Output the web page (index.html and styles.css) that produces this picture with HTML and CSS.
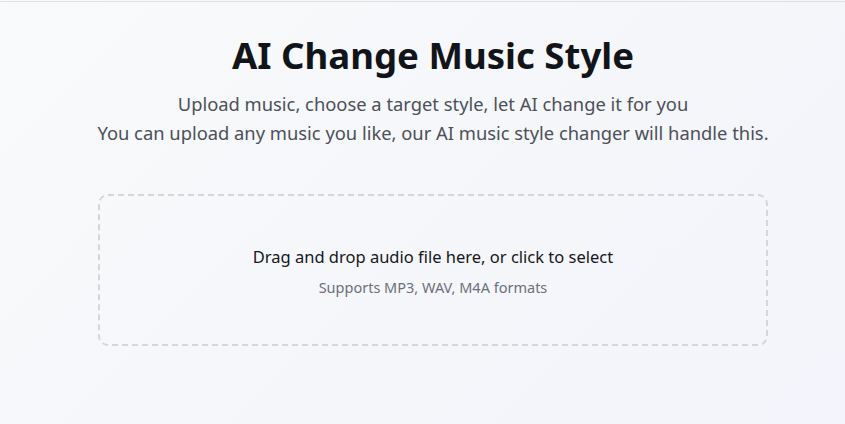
FILE: index.html
```html
<!DOCTYPE html>
<html>
<head>
<meta charset="utf-8">
<link rel="stylesheet" href="styles.css">
</head>
<body>
<div class="page">
  <main class="main">
    <h1 class="title">AI Change Music Style</h1>
    <p class="subtitle">Upload music, choose a target style, let AI change it for you<br>You can upload any music you like, our AI music style changer will handle this.</p>
    <div class="dropzone">
      <p class="drop-main">Drag and drop audio file here, or click to select</p>
      <p class="drop-sub">Supports MP3, WAV, M4A formats</p>
    </div>
  </main>
</div>
</body>
</html>
```

FILE: styles.css
```css
html, body {
  margin: 0;
  padding: 0;
  height: 100%;
}
body {
  font-family: "Noto Sans", "Open Sans", sans-serif;
  background: linear-gradient(135deg, #f9fafb 0%, #f5f6fa 60%, #f4f4fc 100%);
  overflow: hidden;
}
.page {
  height: 100%;
  box-sizing: border-box;
  border-top: 1px solid #dddfe3;
  margin-top: 1px;
  padding-left: 21px;
}
.main {
  width: 670px;
  margin: 0 auto;
  padding-top: 29px;
  text-align: center;
}
.title {
  margin: 0;
  font-size: 36.6px;
  font-weight: 700;
  line-height: 48px;
  color: #111418;
}
.subtitle {
  margin: 10px -20px 0;
  font-size: 18.35px;
  line-height: 29px;
  color: #4b5059;
  white-space: nowrap;
}
.dropzone {
  margin-top: 47px;
  height: 152px;
  box-sizing: border-box;
  border: 2px dashed #d4d6da;
  border-radius: 10px;
  display: flex;
  flex-direction: column;
  align-items: center;
  justify-content: center;
  gap: 9px;
  padding-top: 2px;
}
.drop-main {
  margin: 0;
  font-size: 16.5px;
  line-height: 22px;
  color: #15171a;
}
.drop-sub {
  margin: 0;
  font-size: 14.5px;
  line-height: 20px;
  color: #6b7079;
}
```
